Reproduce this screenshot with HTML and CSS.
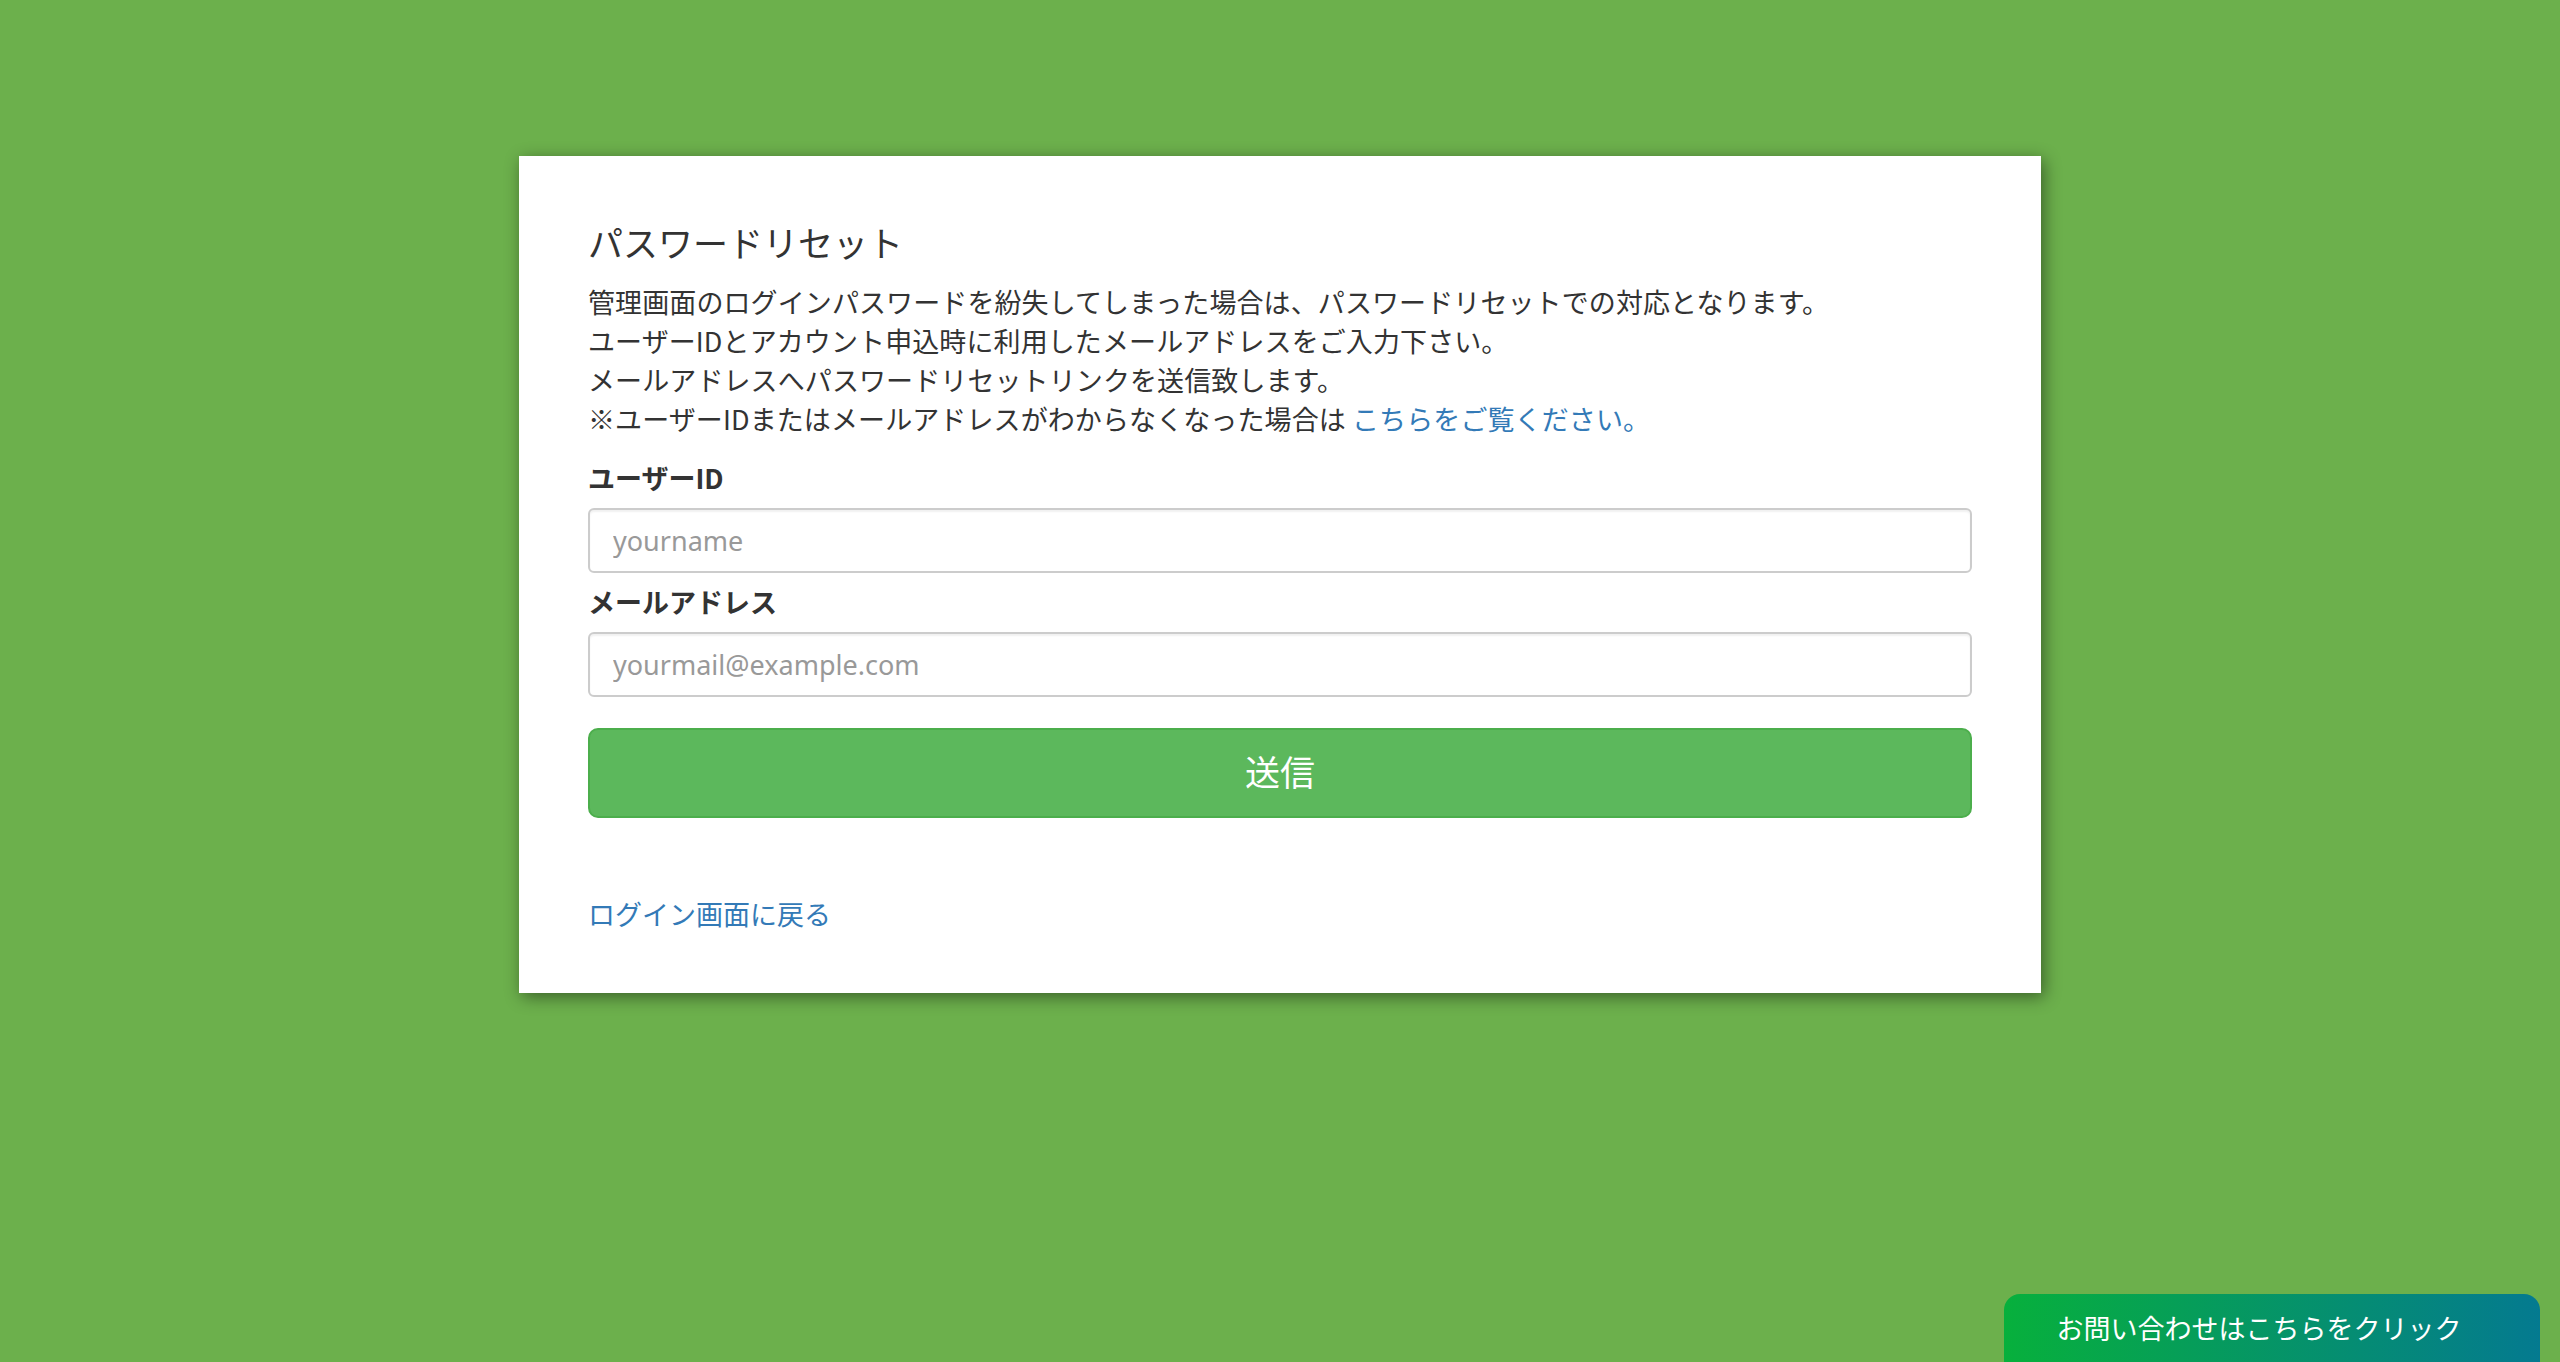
FILE: index.html
```html
<!DOCTYPE html>
<html lang="ja">

<head>
    <meta charset="UTF-8">
    <meta name="viewport" content="width=device-width, initial-scale=1.0">
    <title>パスワードリセット</title>
    <link rel="stylesheet" href="styles.css">
</head>

<body>
    <main class="card">
        <h1 class="title">パスワードリセット</h1>
        <p class="lead">
            管理画面のログインパスワードを紛失してしまった場合は、パスワードリセットでの対応となります。<br>
            ユーザーIDとアカウント申込時に利用したメールアドレスをご入力下さい。<br>
            メールアドレスへパスワードリセットリンクを送信致します。<br>
            ※ユーザーIDまたはメールアドレスがわからなくなった場合は <a href="#">こちらをご覧ください。</a>
        </p>
        <form class="form">
            <div class="form-group">
                <label for="userid">ユーザーID</label>
                <input type="text" id="userid" placeholder="yourname">
            </div>
            <div class="form-group">
                <label for="mail">メールアドレス</label>
                <input type="email" id="mail" placeholder="yourmail@example.com">
            </div>
            <button type="submit" class="btn-send">送信</button>
        </form>
        <a href="#" class="back">ログイン画面に戻る</a>
    </main>

    <a href="#" class="contact">お問い合わせはこちらをクリック</a>
</body>

</html>
```

FILE: styles.css
```css
* {
    margin: 0;
    padding: 0;
    box-sizing: border-box;
}

body {
    background-color: #6cb04c;
    min-height: 100vh;
    font-family: "Noto Sans CJK JP", "Noto Sans", sans-serif;
    font-size: 27px;
    line-height: 39px;
    color: #333;
    overflow: hidden;
}

a {
    color: #337ab7;
    text-decoration: none;
}

.card {
    width: 1522px;
    margin: 156px auto 0;
    padding: 67px 69px 60px;
    background-color: #fff;
    box-shadow: 3px 4px 16px rgba(0, 0, 0, 0.45);
}

.title {
    font-size: 35px;
    font-weight: 400;
    line-height: 38px;
    margin-bottom: 21px;
}

.lead {
    margin-bottom: 20px;
    letter-spacing: 0.1px;
}

.form-group {
    display: flex;
    flex-direction: column;
    margin-bottom: 9px;
}

.form-group label {
    font-weight: 700;
    margin-bottom: 11px;
}

.form-group input {
    height: 65px;
    padding: 0 23px;
    border: 2px solid #ccc;
    border-radius: 6px;
    font-family: "Noto Sans", "Noto Sans CJK JP", sans-serif;
    font-size: 27px;
    color: #555;
    box-shadow: inset 0 2px 2px rgba(0, 0, 0, 0.06);
}

.form-group input::placeholder {
    color: #999;
}

.btn-send {
    display: block;
    width: 100%;
    height: 90px;
    margin-top: 31px;
    padding-bottom: 5px;
    background-color: #5cb85c;
    border: 2px solid #4cae4c;
    border-radius: 10px;
    color: #fff;
    font-family: "Noto Sans CJK JP", sans-serif;
    font-size: 35px;
}

.back {
    display: inline-block;
    margin-top: 76px;
}

.contact {
    position: fixed;
    right: 20px;
    bottom: 0;
    width: 536px;
    height: 68px;
    display: flex;
    justify-content: center;
    align-items: center;
    padding: 0 26px 2px 0;
    border-radius: 16px 16px 0 0;
    background: linear-gradient(90deg, #07b03c, #047a90);
    color: #fff;
    font-size: 27px;
}
```
